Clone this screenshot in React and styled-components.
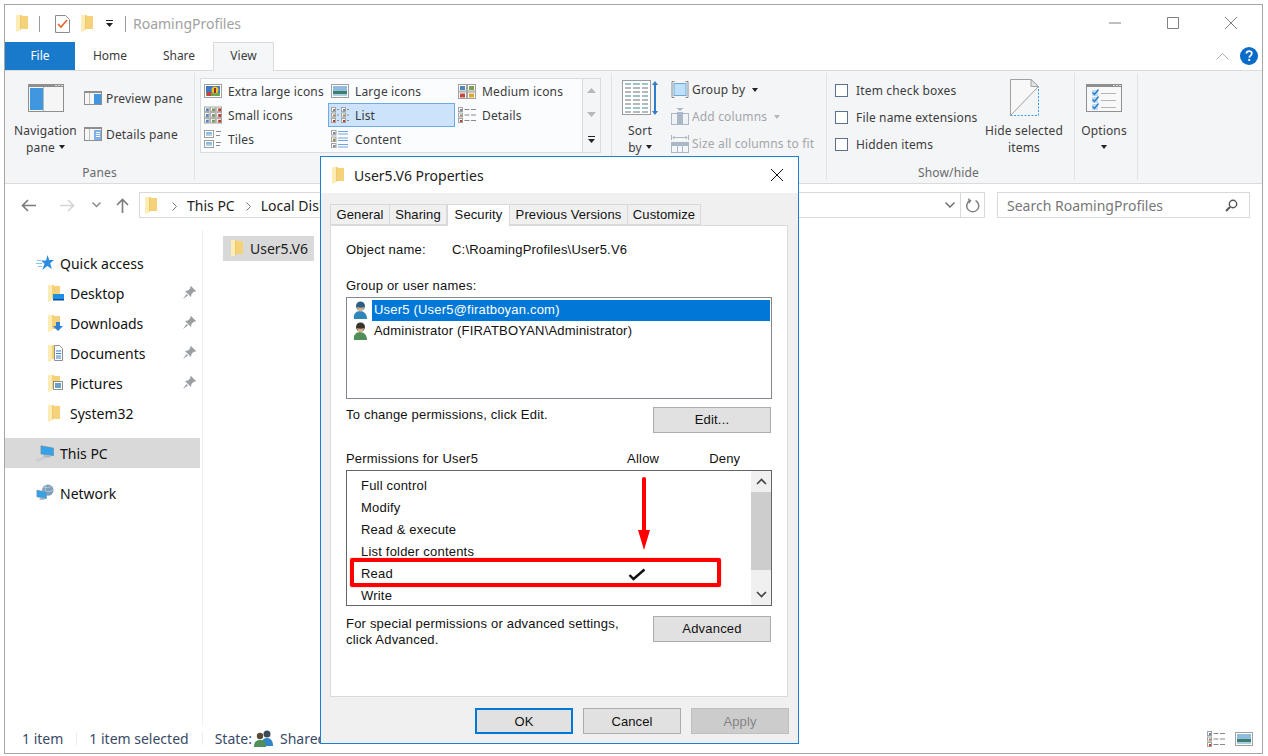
import React from "react";
import styled, { createGlobalStyle } from "styled-components";

const Global = createGlobalStyle`
  html, body { margin: 0; padding: 0; background: #fff; overflow: hidden; }
  * { box-sizing: border-box; }
  #root { width: 1268px; height: 756px; }
`;
const UI = `"Noto Sans", "Open Sans", sans-serif`;
const DLG = `"Liberation Sans", Arial, sans-serif`;

const Page = styled.div`
  position: relative; width: 1268px; height: 756px; padding: 4px 0 0 4px;
  font-family: ${UI}; font-size: 12px; color: #3c3c3c;
`;
const Win = styled.div`
  width: 1259px; height: 750px; border: 1px solid #a6a6a6; display: flex; flex-direction: column; overflow: hidden;
`;
const TitleBar = styled.div`
  height: 37px; display: flex; align-items: center; padding-left: 11px; flex: none;
`;
const QuickSep = styled.span`
  width: 1px; height: 16px; background: #9a9a9a; margin: ${p => p.$m};
`;
const Spacer = styled.span`
  width: ${p => p.$w}px; flex: none;
`;
const TitleText = styled.span`
  font-size: 14px; color: #a2a2a2; margin-left: 7px;
`;
const WinBtns = styled.div`
  margin-left: auto; display: flex; align-items: center; gap: 46px; padding: 0 25px 1px 0;
`;
const TabRow = styled.div`
  height: 29px; flex: none; display: flex; border-bottom: 1px solid #dadbdc; position: relative;
`;
const FileTab = styled.div`
  width: 70px; height: 28px; background: #1979ca; color: #fff; display: flex; align-items: center; justify-content: center; padding-bottom: 2px;
`;
const Tab = styled.div`
  width: ${p => p.$w}px; height: ${p => p.$on ? 29 : 28}px; display: flex; align-items: center; justify-content: center; padding-bottom: 2px;
  ${p => p.$on && `background:#f5f6f7; border:1px solid #dadbdc; border-bottom:0; padding-bottom:3px;`}
`;
const HelpArea = styled.div`
  margin-left: auto; display: flex; align-items: center; gap: 11px; padding-right: 4px; height: 28px;
`;
const Ribbon = styled.div`
  height: 113px; flex: none; display: flex; background: #f4f5f7; border-bottom: 1px solid #dadbdc; padding: 2px 0 3px; letter-spacing: .16px;
`;
const Group = styled.div`
  width: ${p => p.$w}px; flex: none; display: flex; flex-direction: column; border-right: 1px solid #e2e3e5;
`;
const GroupBody = styled.div`
  height: 91px; display: flex; padding-left: ${p => p.$pl || 0}px;
`;
const GroupLabel = styled.div`
  height: 16px; line-height: 18px; text-align: center; color: #6a6a6a; padding-right: ${p => p.$pr || 0}px;
`;
const Large = styled.div`
  width: ${p => p.$w}px; flex: none; display: flex; flex-direction: column; align-items: center; line-height: 17px; text-align: center; white-space: nowrap;
`;
const IconSlot = styled.div`
  height: 49px; display: flex; align-items: center; justify-content: center; flex: none;
`;
const Caret = styled.span`
  display: inline-block; width: 0; height: 0; border: 3px solid transparent; border-top: 4px solid ${p => p.$c || "#222"}; border-bottom: 0; margin: ${p => p.$m || "0 0 0 4px"}; vertical-align: 3px;
`;
const SmallCol = styled.div`
  display: flex; flex-direction: column; flex: none; padding-top: ${p => p.$pt}px; margin-left: ${p => p.$ml}px; gap: ${p => p.$gap || 0}px; width: ${p => p.$w ? p.$w + "px" : "auto"};
`;
const SmallItem = styled.div`
  height: ${p => p.$h}px; display: flex; align-items: center; gap: ${p => p.$gap || 4}px; white-space: nowrap; color: ${p => p.$off ? "#a3a6aa" : "inherit"};
`;
const Gallery = styled.div`
  width: 401px; height: 75px; margin: 5px 0 0 5px; background: #fbfcfe; border: 1px solid #dadbdc; display: flex;
`;
const GalleryGrid = styled.div`
  width: 381px; display: grid; grid-template-columns: repeat(3, 127px); grid-auto-rows: 24px;
`;
const GalleryItem = styled.div`
  display: flex; align-items: center; gap: 6px; padding-left: 2px; white-space: nowrap; border: 1px solid ${p => p.$on ? "#6ea9e8" : "transparent"}; background: ${p => p.$on ? "#cce4fb" : "transparent"};
`;
const IconBox = styled.span`
  width: 18px; height: 18px; display: flex; align-items: center; justify-content: ${p => p.$start ? "flex-start" : "center"}; flex: none;
`;
const GalleryScroll = styled.div`
  flex: 1; background: #f4f5f7; border-left: 1px solid #dadbdc; display: flex; flex-direction: column; align-items: center; padding-top: 9px; gap: 19px;
`;
const Check = styled.span`
  width: 13px; height: 13px; border: 1px solid #5c6f8e; background: #fff; flex: none;
`;
const NavBar = styled.div`
  height: 46px; flex: none; display: flex; align-items: flex-start; padding: 8px 0 0 16px;
`;
const NavIcon = styled.span`
  display: flex; align-items: center; height: 26px; margin-left: ${p => p.$ml || 0}px;
`;
const Crumbs = styled.div`
  width: 846px; height: 26px; margin-left: 10px; border: 1px solid #d9d9d9; display: flex; align-items: center; padding-left: 5px; font-size: 14px; color: #222; white-space: nowrap; position: relative;
`;
const CrumbText = styled.span`
  margin: ${p => p.$m};
`;
const CrumbEnd = styled.div`
  margin-left: auto; display: flex; align-items: center; height: 100%;
`;
const RefreshCell = styled.div`
  width: 24px; height: 100%; border-left: 1px solid #d9d9d9; margin-left: 5px; display: flex; align-items: center; justify-content: center;
`;
const Search = styled.div`
  width: 253px; height: 26px; margin-left: 12px; border: 1px solid #d9d9d9; display: flex; align-items: center; justify-content: space-between; padding: 0 11px 0 9px; font-size: 14px; color: #777;
`;
const Main = styled.div`
  flex: 1; display: flex; min-height: 0;
`;
const Side = styled.div`
  width: 198px; flex: none; border-right: 1px solid #f0f0f0; padding-top: 18px; display: flex; flex-direction: column;
`;
const NavRow = styled.div`
  width: 195px; height: 30px; flex: none; display: flex; align-items: center; padding-left: ${p => p.$sub ? 43 : 31}px; gap: ${p => p.$sub ? 4 : 6}px;
  font-size: 14px; color: #111; background: ${p => p.$on ? "#d9d9d9" : "transparent"}; margin-top: ${p => p.$mt || 0}px; position: relative;
`;
const Pin = styled.span`
  position: absolute; left: 178px; top: 8px; display: flex;
`;
const Content = styled.div`
  flex: 1; padding: 6px 0 0 20px;
`;
const FileItem = styled.div`
  width: 91px; height: 25px; background: #d9d9d9; display: flex; align-items: center; gap: 7px; padding-left: 8px; font-size: 14px; color: #222;
`;
const Status = styled.div`
  height: 27px; flex: none; display: flex; align-items: center; font-size: 14px; color: #3a4a66; padding: 0 0 2px 17px; position: relative;
`;
const StatusText = styled.span`
  margin-left: ${p => p.$ml || 0}px; white-space: nowrap;
`;
const StatusSep = styled.span`
  width: 1px; height: 13px; background: #ececec; margin-left: ${p => p.$ml}px;
`;
const StatusIcons = styled.div`
  margin-left: auto; display: flex; align-items: center; gap: 10px; padding-right: 9px;
`;

/* dialog */
const Dialog = styled.div`
  position: absolute; left: 320px; top: 156px; width: 479px; height: 588px; border: 1px solid #1b80d4; background: #f0f0f0; display: flex; flex-direction: column; font-family: ${DLG}; font-size: 13px; letter-spacing: .2px; color: #111;
`;
const DlgTitle = styled.div`
  height: 36px; flex: none; background: #fff; display: flex; align-items: center; padding: 0 15px 0 11px; gap: 10px; font-family: ${UI}; font-size: 14px; letter-spacing: 0; color: #222;
`;
const DlgClose = styled.span`
  margin-left: auto; display: flex;
`;
const DlgTabs = styled.div`
  display: flex; margin: 11px 0 0 9px; height: 22px; flex: none; position: relative; z-index: 1; letter-spacing: .1px;
`;
const DlgTab = styled.div`
  width: ${p => p.$w}px; height: ${p => p.$on ? 22 : 21}px; background: ${p => p.$on ? "#fff" : "#f0f0f0"}; border: 1px solid #d9d9d9; border-bottom: ${p => p.$on ? 0 : "1px solid #d9d9d9"}; border-left: ${p => p.$first || p.$on ? "1px solid #d9d9d9" : 0};
  display: flex; align-items: center; justify-content: center; white-space: nowrap; padding-bottom: ${p => p.$on ? 3 : 0}px;
`;
const Panel = styled.div`
  height: 472px; margin: -1px 10px 0 9px; background: #fff; border: 1px solid #d9d9d9; padding: 16px 15px 0; flex: none; display: flex; flex-direction: column;
`;
const ObjRow = styled.div`
  display: flex; line-height: 15px;
`;
const ObjKey = styled.span`
  width: 106px; flex: none;
`;
const Label = styled.div`
  line-height: 15px; margin-top: ${p => p.$mt}px;
`;
const UserList = styled.div`
  height: 102px; margin-top: 4px; border: 1px solid #828790; padding: 1px; display: flex; flex-direction: column;
`;
const UserRow = styled.div`
  height: ${p => p.$h}px; display: flex; align-items: center; padding-left: 5px; gap: 4px;
`;
const UserName = styled.span`
  flex: 1; height: 21px; line-height: 20px; padding-left: 2px; white-space: nowrap; background: ${p => p.$on ? "#0078d7" : "transparent"}; color: ${p => p.$on ? "#fff" : "#111"};
`;
const SplitRow = styled.div`
  display: flex; justify-content: space-between; align-items: flex-start; margin-top: ${p => p.$mt}px; line-height: 16px; padding-right: 1px;
`;
const SmallNote = styled.div`
  white-space: nowrap;
`;
const DlgBtn = styled.div`
  width: ${p => p.$w || 118}px; height: 26px; flex: none; display: flex; align-items: center; justify-content: center;
  background: ${p => p.$off ? "#cccccc" : "#e1e1e1"}; color: ${p => p.$off ? "#858585" : "#111"};
  border: ${p => p.$primary ? "2px solid #0078d7" : p.$off ? "1px solid #bfbfbf" : "1px solid #adadad"};
`;
const PermHead = styled.div`
  display: flex; margin-top: 18px; line-height: 15px;
`;
const PermCol = styled.span`
  margin-left: ${p => p.$ml}px;
`;
const PermList = styled.div`
  height: 136px; margin-top: 4px; border: 1px solid #646464; display: flex; position: relative; overflow: hidden;
`;
const PermRows = styled.div`
  flex: 1; padding: 4px 0 0 14px; display: flex; flex-direction: column;
`;
const PermRow = styled.div`
  height: 22px; line-height: 22px; flex: none; position: relative;
`;
const Scroll = styled.div`
  width: 20px; background: #f0f0f0; display: flex; flex-direction: column; align-items: center; justify-content: space-between; position: relative;
`;
const ScrollBtn = styled.div`
  height: 21px; display: flex; align-items: center; justify-content: center; flex: none; position: relative;
`;
const Thumb = styled.div`
  position: absolute; top: 21px; left: 0; width: 100%; height: 78px; background: #cdcdcd;
`;
const Highlight = styled.div`
  position: absolute; left: 3px; top: 87px; width: 371px; height: 29px; border: 4px solid #f00; border-radius: 2px; z-index: 2; box-shadow: 0 0 1px #f00;
`;
const ArrowAt = styled.span`
  position: absolute; left: 291px; top: 6px; z-index: 2; display: flex;
`;
const Tick = styled.span`
  position: absolute; left: 267px; top: 5px; display: flex;
`;
const DlgFooter = styled.div`
  display: flex; justify-content: flex-end; gap: 10px; margin-top: 11px; padding-right: 9px; letter-spacing: .1px;
`;

/* ---- drawings ---- */
const Folder = ({ h = 17 }) => (
  <svg width={h * 12 / 17} height={h} viewBox="0 0 12 17">
    <path fill="#f5d27a" d="M3 0h2.500l1 1H12v13H3z" />
    <path fill="#fdedb4" d="M0 0h4v15.500L0 17z" />
    <path fill="#e9c468" d="M4 1h.6v14H4z" />
  </svg>
);
const Cell = ({ x, y, s = 5, c = "#5a86b5" }) => (
  <g>
    <rect x={x + .5} y={y + .5} width={s} height={s} fill="#fff" stroke="#a2a2a2" />
    <rect x={x + 2} y={y + 2} width={s - 2} height={s - 2} fill={c} />
  </g>
);
const Dash = ({ x, y, w, c = "#8a8a8a" }) => <rect x={x} y={y} width={w} height="1" fill={c} />;
const Land = ({ x = 0, y = 0, w = 18, h = 14 }) => (
  <g>
    <rect x={x + .5} y={y + .5} width={w - 1} height={h - 1} fill="#fff" stroke="#a0a0a0" />
    <rect x={x + 2} y={y + 2} width={w - 4} height={(h - 4) / 2} fill="#8fbde0" />
    <rect x={x + 2} y={y + 2 + (h - 4) / 2} width={w - 4} height={(h - 4) / 2} fill="#3f7f6c" />
    <rect x={x + 2} y={y + h - 4} width={w - 4} height="2" fill="#a9cfe0" />
  </g>
);
const XLarge = () => (
  <svg width="18" height="14" viewBox="0 0 18 14">
    <rect x=".5" y=".5" width="17" height="13" fill="#fff" stroke="#a0a0a0" />
    <rect x="2" y="2" width="14" height="10" fill="#3f78c8" />
    <rect x="2" y="9" width="14" height="3" fill="#6aa84f" />
    <rect x="3" y="8" width="4" height="4" fill="#d83b3b" />
    <circle cx="11" cy="6" r="3.500" fill="#f2c518" />
    <rect x="10" y="4" width="2" height="5" fill="#9a2e2e" />
  </svg>
);
const SmallIcons = () => {
  const cs = ["#5a86b5", "#7a9a5a", "#c0392b"];
  return (
    <svg width="19" height="18" viewBox="0 0 19 18">
      {[0, 6, 12].map(y => [0, 6.5, 13].map((x, i) => <Cell key={x + "-" + y} x={x} y={y} c={cs[i]} />))}
    </svg>
  );
};
const Tiles = () => (
  <svg width="18" height="18" viewBox="0 0 18 18">
    <Land w={10} h={8} /><Dash x={12} y={1} w={5} /><Dash x={12} y={5} w={4} />
    <Land y={10} w={10} h={8} /><Dash x={12} y={12} w={5} /><Dash x={12} y={15} w={4} />
  </svg>
);
const Medium = () => (
  <svg width="18" height="15" viewBox="0 0 18 15">
    <rect x=".5" y=".5" width="8" height="6.500" fill="#fff" stroke="#a0a0a0" /><rect x="2" y="2" width="5" height="4" fill="#4f86b8" />
    <rect x="9.500" y=".5" width="8" height="6.500" fill="#fff" stroke="#a0a0a0" /><rect x="11" y="2" width="5" height="4" fill="#7f9f50" />
    <rect x=".5" y="8" width="8" height="6.500" fill="#fff" stroke="#a0a0a0" /><rect x="2" y="9.500" width="5" height="4" fill="#c9463a" />
    <rect x="9.500" y="8" width="8" height="6.500" fill="#fff" stroke="#a0a0a0" /><rect x="11" y="9.500" width="5" height="4" fill="#e0a82e" />
  </svg>
);
const ListIco = () => {
  const cs = ["#7a8a9a", "#a08a50", "#c0392b"];
  return (
    <svg width="18" height="16" viewBox="0 0 18 16">
      {[0, 10].map(x => [0, 5.5, 11].map((y, i) => (
        <g key={x + "-" + y}><Cell x={x} y={y} s={4} c={cs[i]} /><Dash x={x + 6} y={y + 2} w={2} /></g>
      )))}
    </svg>
  );
};
const DetailsIco = ({ c0 = "#7a8a9a" }) => {
  const cs = [c0, "#a08a50", "#c0392b"];
  return (
    <svg width="18" height="16" viewBox="0 0 18 16">
      {[0, 5.5, 11].map((y, i) => (
        <g key={y}><Cell x={0} y={y} s={4} c={cs[i]} /><Dash x={6.5} y={y + 2} w={5} /><Dash x={13} y={y + 2} w={5} /></g>
      ))}
    </svg>
  );
};
const ContentIco = () => (
  <svg width="18" height="18" viewBox="0 0 18 18">
    {[0, 6.5, 13].map((y, i) => (
      <g key={y}><Cell x={0} y={y} s={4.5} c={["#7a8a9a", "#a08a50", "#8a8a8a"][i]} /><Dash x={7} y={y + 1} w={10} c="#6ea4dc" /><Dash x={7} y={y + 3.5} w={10} c="#6ea4dc" /></g>
    ))}
  </svg>
);
const WinPane = ({ side }) => (
  <svg width="18" height="14" viewBox="0 0 18 14">
    <rect x=".5" y=".5" width="17" height="13" fill="#f6f6f6" stroke="#8f8f8f" />
    <rect x="0" y="0" width="18" height="2" fill="#8f8f8f" />
    <rect x="5" y="2" width="1" height="11" fill="#c0c0c0" />
    <rect x="10" y="3" width="7" height="10" fill={side} />
    {side === "#7fb1e8" && <g fill="#fff"><rect x="12" y="5" width="4" height="1" /><rect x="12" y="7" width="4" height="1" /><rect x="12" y="9" width="4" height="1" /></g>}
  </svg>
);
const NavPane = () => (
  <svg width="36" height="28" viewBox="0 0 36 28">
    <rect x=".5" y=".5" width="35" height="27" fill="#f6f6f6" stroke="#8f8f8f" />
    <rect width="36" height="3" fill="#8f8f8f" />
    <rect x="27" y="1" width="2" height="1" fill="#ddd" /><rect x="30" y="1" width="2" height="1" fill="#ddd" /><rect x="33" y="1" width="2" height="1" fill="#ddd" />
    <rect x="2" y="4" width="13" height="22" fill="#3f97e0" />
    <rect x="15" y="3" width="1" height="24" fill="#b9b9b9" />
  </svg>
);
const SortIco = () => (
  <svg width="37" height="36" viewBox="0 0 37 36">
    <rect x=".5" y=".5" width="28" height="34" fill="#fff" stroke="#9b9b9b" />
    {[3, 7, 11, 15, 19, 23, 27, 31].map((y, i) => (
      <g key={y} fill={i % 3 === 0 ? "#9fc3c9" : "#b8b8b8"}>
        <rect x="3" y={y} width="6" height="2" /><rect x="11" y={y} width="7" height="2" /><rect x="20" y={y} width="6" height="2" />
      </g>
    ))}
    <path d="M33 1l3 4h-2v26h2l-3 4-3-4h2V5h-2z" fill="#2e7dc9" />
  </svg>
);
const GroupIco = () => (
  <svg width="18" height="17" viewBox="0 0 17 17">
    <path d="M3 .5H.5v16H3M14 .5h2.500v16H14" fill="none" stroke="#8a8a8a" />
    <rect x="2.500" y="2.500" width="12" height="12" fill="#bfe0fb" stroke="#6fa9d8" />
  </svg>
);
const AddColIco = () => (
  <svg width="18" height="17" viewBox="0 0 18 17">
    <path d="M5.500 0h7L9 3z" fill="#a8b6c4" />
    <rect x=".5" y="5.500" width="17" height="11" fill="#f0f3f6" stroke="#a9b7c6" />
    <rect x="6" y="4" width="6" height="13" fill="#a9b7c6" />
  </svg>
);
const SizeColIco = () => (
  <svg width="18" height="18" viewBox="0 0 18 18">
    <path d="M.5 0v5M17.500 0v5M2 2.500h14M3.500 1L2 2.500 3.500 4M14.500 1L16 2.500 14.500 4" fill="none" stroke="#a9b7c6" />
    <rect x=".5" y="7.500" width="17" height="10" fill="#f4f6f8" stroke="#a9b7c6" />
    <rect x="1" y="8" width="16" height="3" fill="#a9b7c6" />
    <path d="M6.500 11v6M11.500 11v6" stroke="#a9b7c6" />
  </svg>
);
const HideIco = () => (
  <svg width="29" height="37" viewBox="0 0 29 37">
    <path d="M.5 36V.5H21L28 7.500" fill="#f8f8f8" stroke="#a0a0a0" />
    <path d="M1 36.500L28 8v28.500z" fill="#f4f5f7" />
    <path d="M.5 36.500L28 8" fill="none" stroke="#a0a0a0" />
    <path d="M.5 36.500h28V8" fill="none" stroke="#3d9be9" strokeDasharray="2 1.500" />
    <path d="M21 .5v7h7.500z" fill="#e4e4e4" stroke="#a0a0a0" />
  </svg>
);
const OptionsIco = () => (
  <svg width="36" height="28" viewBox="0 0 36 28">
    <rect x=".5" y=".5" width="35" height="27" fill="#f8f8f8" stroke="#8f8f8f" />
    <rect width="36" height="3" fill="#8f8f8f" />
    <rect x="27" y="1" width="2" height="1" fill="#ddd" /><rect x="30" y="1" width="2" height="1" fill="#ddd" /><rect x="33" y="1" width="2" height="1" fill="#ddd" />
    {[6, 13, 20].map(y => (
      <g key={y}>
        <rect x="6" y={y} width="6" height="6" fill="#bcdcf6" />
        <path d={`M6.500 ${y + 2.5}l2 2 4-5`} fill="none" stroke="#2b78c6" strokeWidth="1.400" />
        <rect x="15" y={y + 3} width="15" height="1" fill="#b5b5b5" />
      </g>
    ))}
  </svg>
);
const QuickCheck = () => (
  <svg width="15" height="18" viewBox="0 0 15 18">
    <path d="M.5.5h10l4 4v13H.5z" fill="#fff" stroke="#8c8c8c" />
    <path d="M3 9l3 3 6-7" fill="none" stroke="#e5632b" strokeWidth="1.600" />
  </svg>
);
const Down = () => (
  <svg width="7" height="7" viewBox="0 0 7 7"><rect width="7" height="1" fill="#222" /><path d="M0 3h7L3.500 7z" fill="#222" /></svg>
);
const HelpBadge = () => (
  <svg width="18" height="18" viewBox="0 0 18 18">
    <circle cx="9" cy="9" r="9" fill="#0a6cc9" />
    <path d="M6.300 6.600c.2-1.600 1.300-2.400 2.800-2.400 1.600 0 2.700.9 2.700 2.300 0 2.200-2.500 2.200-2.500 4.300" fill="none" stroke="#fff" strokeWidth="1.700" />
    <rect x="8.300" y="12" width="1.900" height="2" fill="#fff" />
  </svg>
);
const Line = ({ w, h, d, c = "#8a8a8a", sw = 1 }) => (
  <svg width={w} height={h} viewBox={`0 0 ${w} ${h}`}><path d={d} fill="none" stroke={c} strokeWidth={sw} /></svg>
);
const Star = () => (
  <svg width="18" height="16" viewBox="0 0 18 16">
    <path d="M11.500 0l1.700 5H18l-3.800 3.200L15.800 14l-4.500-3-5 4 2.200-6.300L5 5.400h5z" fill="#2b8ee0" />
    <path d="M1 5.500h4M0 8.500h6M2 11.500h4" stroke="#8cc4f2" />
  </svg>
);
const Overlay = ({ kind }) => (
  <svg width="16" height="17" viewBox="0 0 16 17">
    <path fill="#f5d27a" d="M3 0h2.500l1 1H12v13H3z" />
    <path fill="#fdedb4" d="M0 0h4v15.500L0 17z" />
    {kind === "desk" && <g><rect x="5" y="9" width="11" height="6" fill="#1d8fe8" /><rect x="5" y="14" width="11" height="1.500" fill="#0c4f90" /></g>}
    {kind === "down" && <path d="M8 7h4v4h3l-5 5-5-5h3z" fill="#2f7fd6" />}
    {kind === "doc" && <g><path d="M6.500.5h5l3 3v12h-8z" fill="#fff" stroke="#8f8f8f" /><path d="M8 6h5M8 8.500h5M8 11h5M8 13h5" stroke="#2f7fd6" /></g>}
    {kind === "pic" && <g><rect x="5.500" y="6.500" width="9" height="8" fill="#fff" stroke="#8f8f8f" /><rect x="7" y="8" width="6" height="5" fill="#6aa0c8" /></g>}
  </svg>
);
const PinIco = () => (
  <svg width="13" height="13" viewBox="0 0 13 13">
    <path d="M8 0l5 5-1 1-1-.5L8.500 8 8 11 2 5l3-.5L7.500 2 7 1zM3.500 8L0 13l5-3.500z" fill="#9a9fa4" />
  </svg>
);
const PcIco = () => (
  <svg width="20" height="17" viewBox="0 0 20 17">
    <path d="M5.500 0L19.500 2.500V11L5.500 9z" fill="#36a3e8" stroke="#6e8ca0" strokeWidth=".7" />
    <path d="M9 10l7 1 .5 2H8z" fill="#aeb7bd" />
    <path d="M0 15.500l8-2.500M1 17l9-3" stroke="#c3c7ca" />
  </svg>
);
const NetIco = () => (
  <svg width="19" height="18" viewBox="0 0 19 18">
    <circle cx="12.500" cy="6" r="6" fill="#7d9fba" />
    <path d="M8 3c3 1 6 0 8-1M7 7c3 1 8 1 11-1M11 0c-2 4-1 8 1 12" fill="none" stroke="#c9dcea" strokeWidth=".7" />
    <path d="M1 6l10 2v7L1 13z" fill="#36a3e8" stroke="#6e8ca0" strokeWidth=".7" />
    <path d="M5 14h4v2H3z" fill="#9fb2c0" />
  </svg>
);
const Person = ({ body, hair }) => (
  <svg width="15" height="19" viewBox="0 0 15 19">
    <path d="M1 18c-1-5 2-8 6-8s7 3 7 8z" fill={body} />
    <circle cx="7.500" cy="5" r="4.500" fill={hair} />
    <path d="M4 6c2 1 5 1 7 0-.5 3-2 4.500-3.500 4.500S4.500 9 4 6z" fill="#d8b08c" />
  </svg>
);
const TwoPeople = () => (
  <svg width="19" height="17" viewBox="0 0 19 17">
    <circle cx="13" cy="4" r="3.500" fill="#3c4a55" />
    <path d="M7 16c0-5 2-8 6-8s6 3 6 8z" fill="#2f86c8" />
    <circle cx="6" cy="6" r="3.200" fill="#5a4a3a" />
    <path d="M0 17c0-5 2-7 6-7s6 2 6 7z" fill="#4f8f5a" />
  </svg>
);
const Chev = ({ up }) => (
  <svg width="11" height="7" viewBox="0 0 11 7">
    <path d={up ? "M1 6l4.500-4.500L10 6" : "M1 1l4.500 4.500L10 1"} fill="none" stroke="#444" strokeWidth="1.600" />
  </svg>
);
const Tri = ({ up, c = "#b5b9be" }) => (
  <svg width="9" height="5" viewBox="0 0 9 5"><path d={up ? "M0 5h9L4.500 0z" : "M0 0h9L4.500 5z"} fill={c} /></svg>
);

const App = () => (
  <Page>
    <Global />
    <Win>
      <TitleBar>
        <Folder />
        <QuickSep $m="0 15px 0 11px" />
        <QuickCheck />
        <Spacer $w={11} />
        <Folder />
        <Spacer $w={13} />
        <Down />
        <QuickSep $m="0 0 0 12px" />
        <TitleText>RoamingProfiles</TitleText>
        <WinBtns>
          <Line w={12} h={12} d="M0 6h12" c="#808080" />
          <Line w={12} h={12} d="M.5.5h11v11H.5z" c="#808080" />
          <Line w={12} h={12} d="M0 0l12 12M12 0L0 12" c="#808080" />
        </WinBtns>
      </TitleBar>
      <TabRow>
        <FileTab>File</FileTab>
        <Tab $w={70}>Home</Tab>
        <Tab $w={68}>Share</Tab>
        <Tab $w={61} $on>View</Tab>
        <HelpArea>
          <Line w={13} h={8} d="M.5 7.500l6-6 6 6" c="#b0b0b0" />
          <HelpBadge />
        </HelpArea>
      </TabRow>
      <Ribbon>
        <Group $w={190}>
          <GroupBody $pl={9}>
            <Large $w={63}>
              <IconSlot><NavPane /></IconSlot>
              Navigation<span>pane<Caret /></span>
            </Large>
            <SmallCol $pt={13} $ml={7} $gap={12}>
              <SmallItem $h={24}><WinPane side="#3f97e0" />Preview pane</SmallItem>
              <SmallItem $h={24}><WinPane side="#7fb1e8" />Details pane</SmallItem>
            </SmallCol>
          </GroupBody>
          <GroupLabel>Panes</GroupLabel>
        </Group>
        <Group $w={417}>
          <Gallery>
            <GalleryGrid>
              <GalleryItem><IconBox><XLarge /></IconBox>Extra large icons</GalleryItem>
              <GalleryItem><IconBox><svg width="18" height="14" viewBox="0 0 18 14"><Land /></svg></IconBox>Large icons</GalleryItem>
              <GalleryItem><IconBox><Medium /></IconBox>Medium icons</GalleryItem>
              <GalleryItem><IconBox><SmallIcons /></IconBox>Small icons</GalleryItem>
              <GalleryItem $on><IconBox><ListIco /></IconBox>List</GalleryItem>
              <GalleryItem><IconBox><DetailsIco /></IconBox>Details</GalleryItem>
              <GalleryItem><IconBox><Tiles /></IconBox>Tiles</GalleryItem>
              <GalleryItem><IconBox><ContentIco /></IconBox>Content</GalleryItem>
            </GalleryGrid>
            <GalleryScroll>
              <Tri up />
              <Tri />
              <Down />
            </GalleryScroll>
          </Gallery>
        </Group>
        <Group $w={215}>
          <GroupBody $pl={8}>
            <Large $w={40}>
              <IconSlot><SortIco /></IconSlot>
              Sort<span>by<Caret /></span>
            </Large>
            <SmallCol $pt={3} $ml={11}>
              <SmallItem $h={27} $gap={3}><GroupIco />Group by<Caret /></SmallItem>
              <SmallItem $h={27} $gap={3} $off><AddColIco />Add columns<Caret $c="#b5b8bc" /></SmallItem>
              <SmallItem $h={27} $gap={3} $off><SizeColIco />Size all columns to fit</SmallItem>
            </SmallCol>
          </GroupBody>
        </Group>
        <Group $w={248}>
          <GroupBody $pl={8}>
            <SmallCol $pt={4} $ml={0} $w={149}>
              <SmallItem $h={27} $gap={8}><Check />Item check boxes</SmallItem>
              <SmallItem $h={27} $gap={8}><Check />File name extensions</SmallItem>
              <SmallItem $h={27} $gap={8}><Check />Hidden items</SmallItem>
            </SmallCol>
            <Large $w={80}>
              <IconSlot><HideIco /></IconSlot>
              Hide selected<span>items</span>
            </Large>
          </GroupBody>
          <GroupLabel $pr={4}>Show/hide</GroupLabel>
        </Group>
        <Group $w={63}>
          <GroupBody>
            <Large $w={58}>
              <IconSlot><OptionsIco /></IconSlot>
              Options<Caret $m="6px 0 0" />
            </Large>
          </GroupBody>
        </Group>
      </Ribbon>
      <NavBar>
        <NavIcon><Line w={15} h={13} d="M15 6.500H1.500M7 1L1.500 6.500 7 12" c="#7a7a7a" sw={1.6} /></NavIcon>
        <NavIcon $ml={24}><Line w={15} h={13} d="M0 6.500h13.500M8 1l5.500 5.500L8 12" c="#d4d4d4" sw={1.6} /></NavIcon>
        <NavIcon $ml={17}><Line w={9} h={6} d="M.5.5l4 4 4-4" c="#8a8a8a" sw={1.5} /></NavIcon>
        <NavIcon $ml={15}><Line w={13} h={15} d="M6.500 15V1.500M1 7l5.500-5.500L12 7" c="#7a7a7a" sw={1.6} /></NavIcon>
        <Crumbs>
          <Folder />
          <CrumbText $m="0 0 0 15px"><Line w={5} h={9} d="M.5.5l4 4-4 4" c="#777" /></CrumbText>
          <CrumbText $m="0 0 0 10px">This PC</CrumbText>
          <CrumbText $m="0 0 0 11px"><Line w={5} h={9} d="M.5.5l4 4-4 4" c="#777" /></CrumbText>
          <CrumbText $m="0 0 0 10px">Local Disk (C:)</CrumbText>
          <CrumbEnd>
            <Line w={10} h={6} d="M.5.5l4.500 4.500 4.500-4.500" c="#666" sw={1.3} />
            <RefreshCell>
              <svg width="15" height="15" viewBox="0 0 15 15">
                <path d="M5 2.500a6 6 0 1 0 5.500 0" fill="none" stroke="#808080" strokeWidth="1.500" />
                <path d="M3 0l3.500 2.500L4 6z" fill="#808080" />
              </svg>
            </RefreshCell>
          </CrumbEnd>
        </Crumbs>
        <Search>
          Search RoamingProfiles
          <svg width="13" height="13" viewBox="0 0 13 13">
            <circle cx="8" cy="5" r="3.700" fill="none" stroke="#555" strokeWidth="1.400" />
            <path d="M5 8l-4 4" stroke="#555" strokeWidth="2" />
          </svg>
        </Search>
      </NavBar>
      <Main>
        <Side>
          <NavRow><IconBox><Star /></IconBox>Quick access</NavRow>
          <NavRow $sub><IconBox $start><Overlay kind="desk" /></IconBox>Desktop<Pin><PinIco /></Pin></NavRow>
          <NavRow $sub><IconBox $start><Overlay kind="down" /></IconBox>Downloads<Pin><PinIco /></Pin></NavRow>
          <NavRow $sub><IconBox $start><Overlay kind="doc" /></IconBox>Documents<Pin><PinIco /></Pin></NavRow>
          <NavRow $sub><IconBox $start><Overlay kind="pic" /></IconBox>Pictures<Pin><PinIco /></Pin></NavRow>
          <NavRow $sub><IconBox $start><Folder /></IconBox>System32</NavRow>
          <NavRow $on $mt={10}><IconBox><PcIco /></IconBox>This PC</NavRow>
          <NavRow $mt={10}><IconBox><NetIco /></IconBox>Network</NavRow>
        </Side>
        <Content>
          <FileItem><Folder />User5.V6</FileItem>
        </Content>
      </Main>
      <Status>
        <StatusText>1 item</StatusText>
        <StatusSep $ml={13} />
        <StatusText $ml={12}>1 item selected</StatusText>
        <StatusSep $ml={13} />
        <StatusText $ml={12}>State:</StatusText>
        <Spacer $w={2} />
        <TwoPeople />
        <StatusText $ml={7}>Shared</StatusText>
        <StatusIcons>
          <DetailsIco c0="#5a86b5" />
          <svg width="18" height="14" viewBox="0 0 18 14"><Land /></svg>
        </StatusIcons>
      </Status>
    </Win>
    <Dialog>
      <DlgTitle>
        <Folder />
        User5.V6 Properties
        <DlgClose><Line w={12} h={12} d="M0 0l12 12M12 0L0 12" c="#111" /></DlgClose>
      </DlgTitle>
      <DlgTabs>
        <DlgTab $w={60} $first>General</DlgTab>
        <DlgTab $w={57}>Sharing</DlgTab>
        <DlgTab $w={63} $on>Security</DlgTab>
        <DlgTab $w={118}>Previous Versions</DlgTab>
        <DlgTab $w={73}>Customize</DlgTab>
      </DlgTabs>
      <Panel>
        <ObjRow><ObjKey>Object name:</ObjKey>C:\RoamingProfiles\User5.V6</ObjRow>
        <Label $mt={21}>Group or user names:</Label>
        <UserList>
          <UserRow $h={22}><Person body="#2f86b8" hair="#2d5f86" /><UserName $on>User5 (User5@firatboyan.com)</UserName></UserRow>
          <UserRow $h={20}><Person body="#4f8f5a" hair="#3a332c" /><UserName>Administrator (FIRATBOYAN\Administrator)</UserName></UserRow>
        </UserList>
        <SplitRow $mt={8}>
          <SmallNote>To change permissions, click Edit.</SmallNote>
          <DlgBtn>Edit...</DlgBtn>
        </SplitRow>
        <PermHead>
          <span>Permissions for User5</span>
          <PermCol $ml={149}>Allow</PermCol>
          <PermCol $ml={50}>Deny</PermCol>
        </PermHead>
        <PermList>
          <PermRows>
            <PermRow>Full control</PermRow>
            <PermRow>Modify</PermRow>
            <PermRow>Read &amp; execute</PermRow>
            <PermRow>List folder contents</PermRow>
            <PermRow>Read<Tick><svg width="18" height="13" viewBox="0 0 18 13"><path d="M1.500 7l4 4L16.500 1.500" fill="none" stroke="#111" strokeWidth="2.400" /></svg></Tick></PermRow>
            <PermRow>Write</PermRow>
          </PermRows>
          <Scroll>
            <Thumb />
            <ScrollBtn><Chev up /></ScrollBtn>
            <ScrollBtn><Chev /></ScrollBtn>
          </Scroll>
          <Highlight />
          <ArrowAt>
            <svg width="12" height="73" viewBox="0 0 12 73">
              <rect x="4" y="0" width="4" height="56" rx="2" fill="#f00" />
              <path d="M0 53h12L6 73z" fill="#f00" />
            </svg>
          </ArrowAt>
        </PermList>
        <SplitRow $mt={10}>
          <SmallNote>For special permissions or advanced settings,<br />click Advanced.</SmallNote>
          <DlgBtn>Advanced</DlgBtn>
        </SplitRow>
      </Panel>
      <DlgFooter>
        <DlgBtn $w={98} $primary>OK</DlgBtn>
        <DlgBtn $w={98}>Cancel</DlgBtn>
        <DlgBtn $w={98} $off>Apply</DlgBtn>
      </DlgFooter>
    </Dialog>
  </Page>
);

export default App;
